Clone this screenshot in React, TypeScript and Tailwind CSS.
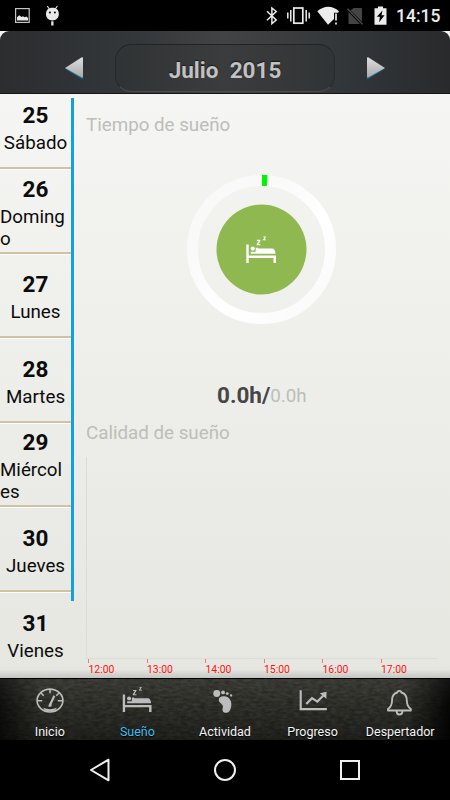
import type { ReactNode } from "react"
import clsx from "clsx"

interface Day {
  number: number
  name: string
}

const days: Day[] = [
  { number: 25, name: "Sábado" },
  { number: 26, name: "Domingo" },
  { number: 27, name: "Lunes" },
  { number: 28, name: "Martes" },
  { number: 29, name: "Miércoles" },
  { number: 30, name: "Jueves" },
  { number: 31, name: "Vienes" },
]

const hours = ["12:00", "13:00", "14:00", "15:00", "16:00", "17:00"]

function StatusBar() {
  return (
    <div className="flex h-[31px] shrink-0 items-center bg-black text-[#ececec]">
      <svg width="70" height="31" viewBox="0 0 70 31" fill="none">
        <rect x="15.6" y="8.6" width="13.6" height="13.8" stroke="#c4c4c0" strokeWidth="1.2" />
        <path d="M17 20.500v-3.300l2.300-2 2.200 1.800 1.300-.8 2 1 1.600-.6 1.600 1.400v2.500z" fill="#e8e8e8" />
        <path d="m47.300 6 2 3m8-3-2 3" stroke="#e8e8e8" strokeWidth="1.1" />
        <path d="M46 14c0-4 2.500-6.200 6.400-6.200s6.400 2.200 6.400 6.200-2.800 6.400-6.400 6.400S46 18 46 14z" fill="#e8e8e8" />
        <path d="M51.200 21.300h2.300v4.200h-2.300z" fill="#e8e8e8" />
        <circle cx="49.900" cy="12.500" r="1" fill="#000" />
        <circle cx="54.900" cy="12.500" r="1" fill="#000" />
      </svg>
      <svg className="ml-auto" width="130" height="31" viewBox="262 0 130 31" fill="none">
        <path d="m267 11.300 9.200 8.700-4.300 3.600V8l4.300 3.500-9.200 8.700" stroke="#ececec" strokeWidth="1.500" />
        <rect x="293.800" y="8" width="9" height="15.200" stroke="#ececec" strokeWidth="1.700" />
        <path d="M290.800 10v11.500M287.800 12.500v6M306.200 10v11.500M309.200 12.500v6" stroke="#ececec" strokeWidth="1.500" />
        <path d="M317.300 11.300C324 5.200 332.500 5.200 339 11.300l-1 1.500h-4v6.300L328 24.800z" fill="#ececec" />
        <path d="M336 13.500v7M336 22.500v2" stroke="#ececec" strokeWidth="1.700" />
        <path d="M353.500 8h7.800q.7 0 .7.700v13L350.500 10.500z M348.500 12 360 24h-10.800q-.7 0-.7-.7z" fill="#444" />
        <path d="m347.500 8.700 15 15.500" stroke="#4c4c4c" strokeWidth="1.300" />
        <path d="M378 6.500h5v1.800h3.500V24.700h-12V8.300h3.500z" fill="#ececec" />
        <path d="m382.500 10.500-5.700 6.300h3.100l-.8 5.500 5.500-7h-3.100z" fill="#000" />
      </svg>
      <span className="mt-[2px] mr-[9px] ml-[4px] w-[45px] text-[17.5px] font-medium">14:15</span>
    </div>
  )
}

function MonthArrow({ direction }: { direction: "left" | "right" }) {
  return (
    <svg width="20" height="24" viewBox="0 0 20 24" className={direction === "right" ? "-scale-x-100" : ""}>
      <defs>
        <linearGradient id={`arrow-${direction}`} x1="0" y1="0" x2="0" y2="1">
          <stop offset="0" stopColor="#dedede" />
          <stop offset="1" stopColor="#a9a9a9" />
        </linearGradient>
      </defs>
      <path d="M1 12.800 17.800 2.300q1.200-.4 1.200.8v19.300q0 1.300-1.200.7z" fill="#126693" />
      <path d="M1 12 17.800 1.300q1.200-.4 1.200.8v18.600q0 1.300-1.200.7z" fill={`url(#arrow-${direction})`} />
    </svg>
  )
}

function MonthHeader() {
  return (
    <header className="h-[64px] shrink-0 bg-[#f5f4f2]">
      <div className="flex h-[63px] items-center justify-center rounded-t-[9px] border-b border-[#141516] bg-[linear-gradient(90deg,#2b2d2f_0%,#34373a_30%,#424344_50%,#34373a_75%,#282a2c_100%)] pt-[12px]">
        <MonthArrow direction="left" />
        <div className="mx-[31px] flex h-[48px] w-[220px] items-center justify-center rounded-[16px] border border-t-[#222324] border-r-[#292b2c] border-b-[#4b4c4d] border-l-[#252729] bg-[linear-gradient(90deg,#303335,#3b3c3d_50%,#313436)] pt-[6px]">
          <h1 className="text-[22.500px] font-bold whitespace-pre text-[#c2c2c2] [text-shadow:0_-1px_1px_#16181a]">
            Julio  2015
          </h1>
        </div>
        <MonthArrow direction="right" />
      </div>
    </header>
  )
}

function DayItem({ day, last }: { day: Day; last: boolean }) {
  return (
    <li
      className={clsx(
        "flex h-[84.55px] shrink-0 flex-col items-center justify-center",
        !last && "border-b-2 border-[#d3c1a2] pt-[5px] shadow-[0_1px_0_#fff]",
        last && "pt-[3px]",
      )}
    >
      <span className="text-[22.5px] leading-[27px] font-bold">{day.number}</span>
      <span className="max-w-full pt-[3px] text-[18.75px] leading-[22px] break-all">{day.name}</span>
    </li>
  )
}

function DayList() {
  return (
    <div className="flex w-[74px] shrink-0 overflow-hidden text-[#0c0c0c]">
      <ul className="-mt-[10.5px] flex w-[71px] shrink-0 flex-col">
        {days.map((day, i) => (
          <DayItem key={day.number} day={day} last={i === days.length - 1} />
        ))}
      </ul>
      <div className="mt-[3px] h-[503px] w-[3px] bg-[#0fa2dc]" />
    </div>
  )
}

function SleepDial() {
  return (
    <svg width="149" height="149" viewBox="0 0 149 149" className="text-white">
      <defs>
        <linearGradient id="ring" x1="0" y1="0" x2="1" y2="1">
          <stop offset="0" stopColor="#fafafa" />
          <stop offset="0.25" stopColor="#f9f9f9" />
          <stop offset="0.6" stopColor="#ffffff" />
          <stop offset="1" stopColor="#f9f9f9" />
        </linearGradient>
      </defs>
      <circle cx="74.500" cy="74.500" r="69" fill="none" stroke="url(#ring)" strokeWidth="11" />
      <path d="M75 0h5.500l-.7 11H75z" fill="#00f500" />
      <circle cx="74.500" cy="74.500" r="45" fill="#90b850" />
      <g transform="translate(59.300 61)">
        <BedShape />
      </g>
    </svg>
  )
}

// 30x27, shared by the dial and the tab bar
function BedShape() {
  return (
    <g fill="currentColor">
      <path d="M0 8.500h2.400v11h27.300V27h-2.500v-5H2.400v5H0z" />
      <circle cx="6.500" cy="12.600" r="2.100" />
      <path d="M4.500 15.700h4.800l.2-3.900h2.100l.5.700h13.700c1.900 0 3.200 1.700 3.400 5.300H4.500z" />
      <path d="M10.600 3.800h3.500v1.100l-2.200 3.300h2.300v1.100h-3.900V8.200l2.200-3.300h-1.900zM17 .4h2.600v.8l-1.600 2.300h1.700v.8h-2.900v-.8l1.600-2.300H17z" />
    </g>
  )
}

function QualityChart() {
  return (
    <div className="ml-[12px] flex w-[351px] flex-col">
      <div className="h-[202px] border-b border-l border-[#dcdcd9]" />
      <div className="flex pl-[2px]">
        {hours.map((hour) => (
          <div key={hour} className="flex w-[58.5px] shrink-0 flex-col text-[10.4px] leading-[13px] text-[#fb1414]">
            <span className="h-[4px] w-px bg-[#f07d7d]" />
            <span className="pl-[0.5px]">{hour}</span>
          </div>
        ))}
      </div>
    </div>
  )
}

function SleepPanel() {
  return (
    <main className="flex grow flex-col overflow-hidden">
      <h2 className="mt-[18px] ml-[12px] text-[18.75px] leading-6 text-[#bdbdbb]">Tiempo de sueño</h2>
      <div className="mt-[38px] ml-[113px]">
        <SleepDial />
      </div>
      <p className="mt-[58px] ml-[143px] flex h-7 items-center">
        <span className="text-[22.5px] font-bold text-[#464646]">0.0h/</span>
        <span className="text-[18.75px] text-[#bdbdbb]">0.0h</span>
      </p>
      <h2 className="mt-[11px] mb-[12px] ml-[12px] text-[18.75px] leading-6 text-[#bdbdbb]">Calidad de sueño</h2>
      <QualityChart />
    </main>
  )
}

function Tab({ label, active, children }: { label: string; active?: boolean; children: ReactNode }) {
  return (
    <div className="flex w-[87.6px] shrink-0 flex-col items-center">
      <svg width="32" height="32" viewBox="0 0 32 32" fill="none" className="mt-[8px] text-[#bcbcbc]">
        {children}
      </svg>
      <span
        className={clsx(
          "mt-[6px] text-[12.5px] leading-4 whitespace-nowrap [text-shadow:0_1px_1px_#000]",
          active ? "text-[#45bdeb]" : "text-[#f5f5f5]",
        )}
      >
        {label}
      </span>
    </div>
  )
}

function TabBar() {
  return (
    <nav className="relative flex h-[62px] shrink-0 justify-center overflow-hidden border-t border-black bg-[#2e2e29]">
      {/* leather grain */}
      <svg className="absolute inset-0 opacity-50" width="450" height="62">
        <filter id="leather" x="0" y="0" width="100%" height="100%" colorInterpolationFilters="sRGB">
          <feTurbulence type="fractalNoise" baseFrequency="0.16 0.4" numOctaves="2" seed="4" />
          <feColorMatrix values=".25 0 0 0 .05  .25 0 0 0 .05  .25 0 0 0 .03  0 0 0 0 1" />
        </filter>
        <rect width="450" height="62" filter="url(#leather)" />
      </svg>
      <div className="absolute inset-0 bg-[linear-gradient(90deg,rgba(0,0,0,0.7),transparent_9%,transparent_90%,rgba(0,0,0,0.9))]" />
      <div className="absolute inset-0 bg-[linear-gradient(180deg,rgba(255,255,255,0.06),transparent_45%,rgba(0,0,0,0.35))]" />
      <div className="relative flex">
        <Tab label="Inicio">
          <ellipse cx="16" cy="14" rx="13.300" ry="11.800" stroke="currentColor" strokeWidth="1.700" />
          <path d="M16 2.500v4M3 14.200h5M24 14.200h5M6.500 6l3 3M25.500 6l-3 3" stroke="currentColor" strokeWidth="1.600" />
          <path d="m20.500 9-4.500 9.500" stroke="currentColor" strokeWidth="2.200" />
          <path d="m15.200 17 2.600 1.200-.5 2.300h-3.100zM9 21.500c4.500 1.800 9.500 1.800 14 0l-1.500 2.300c-3 2-8 2-11 0z" fill="currentColor" />
        </Tab>
        <Tab label="Sueño" active>
          <g transform="translate(1.300 -.6) scale(1 .98)">
            <BedShape />
          </g>
        </Tab>
        <Tab label="Actividad">
          <g fill="currentColor" transform="translate(.8 .8)">
            <circle cx="6.700" cy="6" r="3.600" />
            <circle cx="13.200" cy="4.800" r="2" />
            <circle cx="17.500" cy="6" r="1.500" />
            <circle cx="21.500" cy="8" r="1.200" />
            <path d="M8.800 12.500c0-3 2.800-4.300 6.200-3.700 4.800.8 7.200 4.600 6.700 9.600-.5 4.700-2.300 7.500-5.300 7.500-3.300 0-4.300-2-3.600-4.700.7-2.400.3-3.100-1.500-4.800-1.500-1.400-2.500-2.400-2.500-3.900z" />
          </g>
        </Tab>
        <Tab label="Progreso">
          <path d="M3.300 3.300v19.500h27" stroke="currentColor" strokeWidth="2.200" />
          <path d="m9 17.500 6-6 5.500 3.500 6.500-6.500" stroke="currentColor" strokeWidth="2.200" />
          <path d="m23 6.500 7-1.500-.2 7z" fill="currentColor" />
        </Tab>
        <Tab label="Despertador">
          <path
            d="M3.600 24.300v-1.500c3-2 4.200-4.500 4.200-9 0-4.300 2-7.300 5.500-8.100 0-2.300 4-2.300 4 0 3.500.8 5.700 3.800 5.700 8.100 0 4.500 1 7 4.200 9v1.500zM12.500 25c0 4.500 6 4.500 6 0"
            stroke="currentColor"
            strokeWidth="1.900"
            strokeLinejoin="round"
          />
        </Tab>
      </div>
    </nav>
  )
}

function NavigationBar() {
  return (
    <div className="flex h-[60px] shrink-0 items-center justify-center gap-[101px] bg-black text-[#f0f0f0]">
      <svg width="24" height="26" viewBox="0 0 24 26" fill="none">
        <path d="M20.500 2.700v20.600L3 13z" stroke="currentColor" strokeWidth="2" strokeLinejoin="round" />
      </svg>
      <svg width="24" height="24" viewBox="0 0 24 24" fill="none">
        <circle cx="12" cy="12" r="10" stroke="currentColor" strokeWidth="2" />
      </svg>
      <svg width="24" height="24" viewBox="0 0 24 24" fill="none">
        <rect x="3" y="3" width="18" height="18" stroke="currentColor" strokeWidth="2" />
      </svg>
    </div>
  )
}

export default function App() {
  return (
    <div className="flex h-[800px] w-[450px] flex-col overflow-hidden bg-black font-[Roboto,sans-serif]">
      <StatusBar />
      <MonthHeader />
      <div className="flex h-[583px] shrink-0 bg-[linear-gradient(180deg,#f5f5f3,#e6e7e1_98.5%,#c4c4c1_100%)]">
        <DayList />
        <SleepPanel />
      </div>
      <TabBar />
      <NavigationBar />
    </div>
  )
}
